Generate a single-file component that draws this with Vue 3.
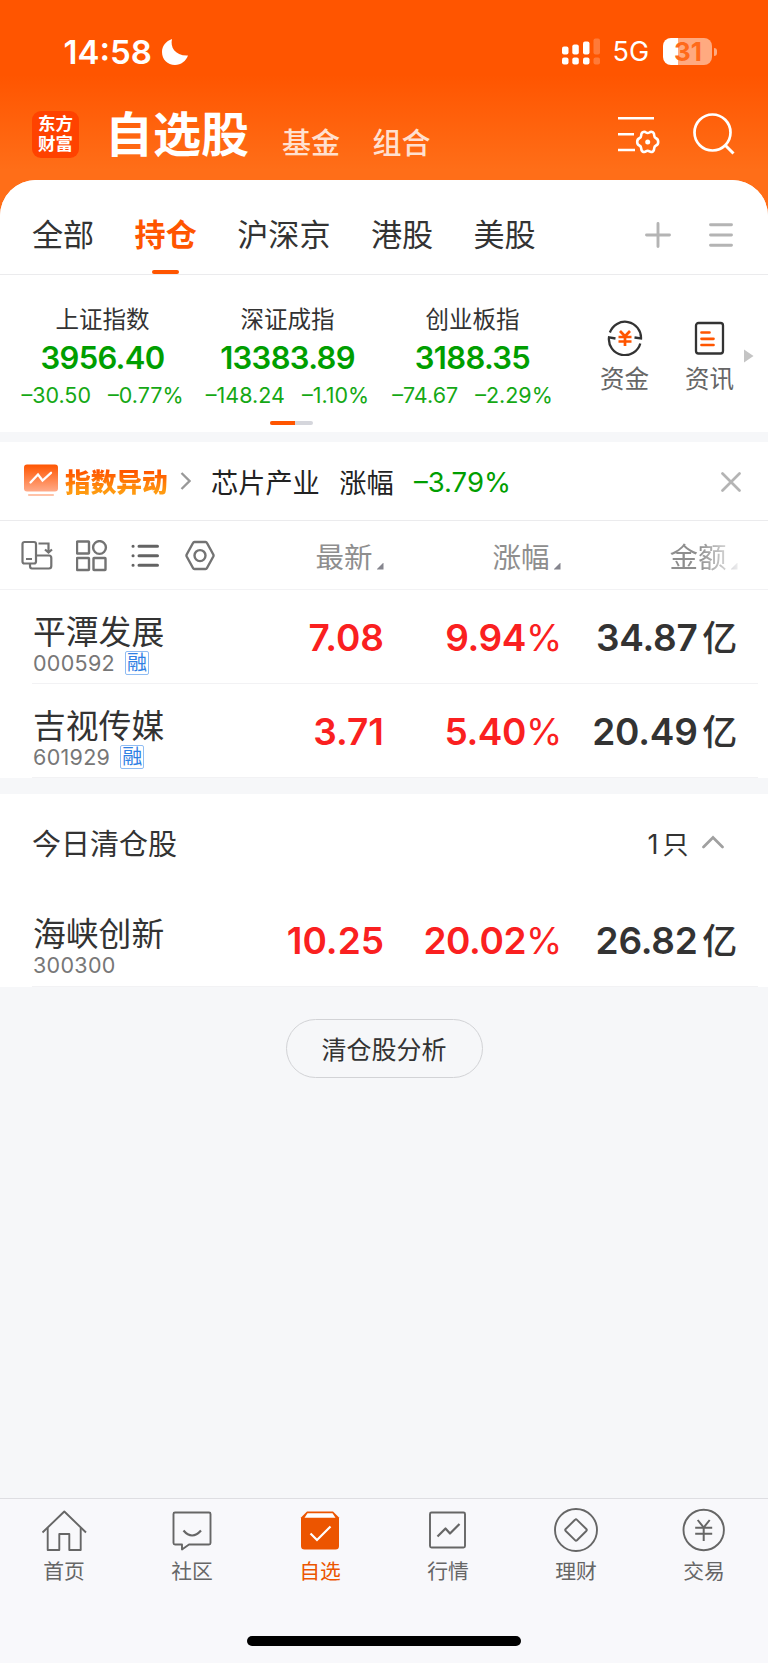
<script setup>
import { ref } from 'vue'

const markets = ['全部', '持仓', '沪深京', '港股', '美股']
const activeMarket = ref('持仓')

const indexes = [
  { name: '上证指数', value: '3956.40', diff: '–30.50', rate: '–0.77%' },
  { name: '深证成指', value: '13383.89', diff: '–148.24', rate: '–1.10%' },
  { name: '创业板指', value: '3188.35', diff: '–74.67', rate: '–2.29%' },
]

const holdings = [
  { name: '平潭发展', code: '000592', margin: true, price: '7.08', rate: '9.94', amount: '34.87' },
  { name: '吉视传媒', code: '601929', margin: true, price: '3.71', rate: '5.40', amount: '20.49' },
]
const cleared = [
  { name: '海峡创新', code: '300300', margin: false, price: '10.25', rate: '20.02', amount: '26.82' },
]

const navs = ['首页', '社区', '自选', '行情', '理财', '交易']
const activeNav = ref('自选')
</script>

<template>
  <div class="phone">
    <header class="top">
      <div class="status">
        <span class="time">14:58</span>
        <svg class="moon" width="28" height="28" viewBox="0 0 28 28">
          <path d="M11 1C9 9 14 18 27 17.500C25 23 20 27 14 27C6.500 27 1 21.500 1 14C1 8 5 3 11 1Z" fill="#fff" />
        </svg>
        <svg class="signal" width="40" height="28" viewBox="0 0 40 28" fill="#fff">
          <rect x="0" y="8.500" width="6.500" height="8" rx="2" />
          <rect x="10.300" y="6.500" width="6.500" height="10" rx="2" />
          <rect x="21" y="3.500" width="6.500" height="13" rx="2" />
          <rect x="0" y="19.500" width="6.500" height="7" rx="2" />
          <rect x="10.300" y="19.500" width="6.500" height="7" rx="2" />
          <rect x="21" y="19.500" width="6.500" height="7" rx="2" />
          <g opacity="0.22">
            <rect x="31.500" y="0.500" width="6.500" height="16" rx="2" />
            <rect x="31.500" y="19.500" width="6.500" height="7" rx="2" />
          </g>
        </svg>
        <span class="net">5G</span>
        <div class="battery">31</div>
        <i class="nub"></i>
      </div>
      <div class="title-bar">
        <div class="logo"><span>东方</span><span>财富</span></div>
        <h1>自选股</h1>
        <span class="sub">基金</span>
        <span class="sub">组合</span>
        <svg class="manage" width="44" height="40" viewBox="0 0 44 40" fill="none" stroke="#fff" stroke-width="2.600">
          <path d="M1 4.300H37M1 20.300H17M1 36H18" />
          <path d="M25.500 18.300Q27.500 17.200 29 18.500Q30.700 19.600 32.400 18.500Q34 17.200 35.900 18.300Q37.300 19.500 37.200 21.500Q37.300 23.500 39 24.300Q41.200 25.300 41.200 27.900Q41.200 30.500 39 31.500Q37.300 32.300 37.200 34.300Q37.300 36.300 35.900 37.500Q34 38.600 32.400 37.300Q30.700 36.200 29 37.300Q27.500 38.600 25.500 37.500Q24.100 36.300 24.200 34.300Q24.100 32.300 22.400 31.500Q20.200 30.500 20.200 27.900Q20.200 25.300 22.400 24.300Q24.100 23.500 24.200 21.500Q24.100 19.500 25.500 18.300Z" />
          <circle cx="30.700" cy="28" r="2.500" fill="#fff" stroke="none" />
        </svg>
        <svg class="search" width="44" height="44" viewBox="0 0 44 44" fill="none" stroke="#fff" stroke-width="2.700">
          <circle cx="20.500" cy="20.500" r="18" />
          <path d="M33 33L41.500 41.500" stroke-width="3" />
        </svg>
      </div>
    </header>

    <main class="card">
      <nav class="markets">
        <span v-for="m in markets" :key="m" class="market" :class="{ active: m === activeMarket }">{{ m }}</span>
        <svg class="plus" width="26" height="26" viewBox="0 0 26 26" stroke="#b4b4b4" stroke-width="2.900" stroke-linecap="round">
          <path d="M13 1.500V24.500M1.500 13H24.500" />
        </svg>
        <svg class="menu" width="24" height="26" viewBox="0 0 24 26" stroke="#b4b4b4" stroke-width="2.900" stroke-linecap="round">
          <path d="M1.500 2.700H22.500M1.500 13H22.500M1.500 23.200H22.500" />
        </svg>
      </nav>

      <section class="indexes">
        <div v-for="item in indexes" :key="item.name" class="index">
          <div class="index-name">{{ item.name }}</div>
          <div class="index-value">{{ item.value }}</div>
          <div class="index-diff"><span>{{ item.diff }}</span><span>{{ item.rate }}</span></div>
        </div>
        <div class="tool">
          <svg width="36" height="36" viewBox="0 0 36 36" fill="none" stroke="#333" stroke-width="2.300">
            <path d="M2.900 12.500A16 16 0 0 1 34 18.500L27.500 17.500" />
            <path d="M33.300 23.500A16 16 0 0 1 2 17.300L8.500 18.500" />
            <path d="M13 11L18 16.300L23 11M11.500 17H24.500M11.500 21.500H24.500M18 16V26" stroke="#ff5500" stroke-width="2.700" />
          </svg>
          <span>资金</span>
        </div>
        <div class="tool">
          <svg width="36" height="36" viewBox="0 0 36 36" fill="none" stroke="#333" stroke-width="2.300">
            <rect x="4" y="3" width="27" height="30.500" rx="2.500" />
            <path d="M9.500 12.500H17.500M9.500 18.800H21.500M9.500 25H21.500" stroke="#ff5500" stroke-width="2.700" stroke-linecap="round" />
          </svg>
          <span>资讯</span>
        </div>
        <svg class="more" width="10" height="14" viewBox="0 0 10 14"><path d="M0 0.500L9.500 7L0 13.500Z" fill="#c4c4c4" /></svg>
        <div class="pager"><i></i></div>
      </section>

      <section class="notice">
        <svg width="34" height="34" viewBox="0 0 34 34" fill="none">
          <defs>
            <linearGradient id="board" x1="0" y1="0" x2="0" y2="1">
              <stop offset="0" stop-color="#ff5500" />
              <stop offset="1" stop-color="#ffab8a" />
            </linearGradient>
          </defs>
          <rect x="0" y="0.500" width="34" height="27" rx="3" fill="url(#board)" />
          <path d="M6.500 18.500L14 10.500L18.500 16.500L27 8.800" stroke="#fff" stroke-width="2.300" stroke-linecap="round" />
          <path d="M5 31H29" stroke="#ffc3a8" stroke-width="2.200" stroke-linecap="round" />
        </svg>
        <b>指数异动</b>
        <svg class="arrow" width="11" height="18" viewBox="0 0 11 18" fill="none" stroke="#999" stroke-width="2.300"><path d="M1.500 1L9.500 9L1.500 17" /></svg>
        <span class="theme">芯片产业</span>
        <span class="theme">涨幅</span>
        <span class="drop">–3.79%</span>
        <svg class="close" width="20" height="20" viewBox="0 0 20 20" stroke="#b4b4b4" stroke-width="2.700" stroke-linecap="round"><path d="M1.500 1.500L18.500 18.500M18.500 1.500L1.500 18.500" /></svg>
      </section>

      <section class="columns">
        <div class="icons">
          <svg width="32" height="32" viewBox="0 0 32 32" fill="none" stroke="#737373" stroke-width="2.200">
            <rect x="1.500" y="2" width="13.500" height="21.500" rx="2" />
            <path d="M5 19H11M17.500 3.500H27.500V12M24 9.500L27.500 12.500L31 9.500" />
            <path d="M15 15.500H28Q30.300 15.500 30.300 18V26Q30.300 28.500 28 28.500H11Q9 28.500 9 26V24" />
          </svg>
          <svg width="32" height="32" viewBox="0 0 32 32" fill="none" stroke="#737373" stroke-width="2.400">
            <rect x="1" y="1.500" width="12" height="12" rx="0.500" />
            <circle cx="23.500" cy="7.500" r="6.400" />
            <rect x="1" y="18" width="12" height="12" rx="0.500" />
            <rect x="17.500" y="18" width="12" height="12" rx="0.500" />
          </svg>
          <svg width="32" height="32" viewBox="0 0 32 32" fill="none" stroke="#636363" stroke-width="3" stroke-linecap="round">
            <path d="M9 6.200H27.500M9 15.700H27.500M9 25.200H27.500M3 6.200H3.100M3 15.700H3.100M3 25.200H3.100" />
          </svg>
          <svg width="32" height="32" viewBox="0 0 32 32" fill="none" stroke="#737373" stroke-width="2.400" stroke-linejoin="round">
            <path d="M9.500 2H20.500Q21.500 2 22 3L28.300 14.500Q28.800 15.500 28.300 16.500L22 28Q21.500 29 20.500 29H9.500Q8.500 29 8 28L1.700 16.500Q1.200 15.500 1.700 14.500L8 3Q8.500 2 9.500 2Z" />
            <circle cx="15" cy="15.600" r="5.500" />
          </svg>
        </div>
        <div class="column">最新<i></i></div>
        <div class="column">涨幅<i></i></div>
        <div class="column faded">金额<i></i></div>
      </section>

      <section class="stocks">
        <div v-for="s in holdings" :key="s.code" class="stock">
          <div class="who">
            <div class="name">{{ s.name }}</div>
            <div class="code">{{ s.code }}<em v-if="s.margin">融</em></div>
          </div>
          <div class="num up">{{ s.price }}</div>
          <div class="num up rate">{{ s.rate }}<u>%</u></div>
          <div class="num amount">{{ s.amount }}<small>亿</small></div>
        </div>
      </section>

      <section class="stocks sold">
        <div class="sold-head">
          <span>今日清仓股</span>
          <span class="count">1<small>只</small></span>
          <svg width="22" height="14" viewBox="0 0 22 14" fill="none" stroke="#a0a0a0" stroke-width="2.700" stroke-linecap="round"><path d="M1.500 12L11 2.500L20.500 12" /></svg>
        </div>
        <div v-for="s in cleared" :key="s.code" class="stock">
          <div class="who">
            <div class="name">{{ s.name }}</div>
            <div class="code">{{ s.code }}<em v-if="s.margin">融</em></div>
          </div>
          <div class="num up">{{ s.price }}</div>
          <div class="num up rate">{{ s.rate }}<u>%</u></div>
          <div class="num amount">{{ s.amount }}<small>亿</small></div>
        </div>
      </section>

      <button class="analyse">清仓股分析</button>
    </main>

    <footer class="tabbar">
      <div class="tabs">
        <div v-for="n in navs" :key="n" class="tab" :class="{ active: n === activeNav }">
          <svg width="46" height="46" viewBox="0 0 46 46" fill="none" stroke="#666" stroke-width="1.900" stroke-linejoin="round">
            <g v-if="n === '首页'">
              <path d="M1.500 24.500L23.300 3.500L45 24.500" />
              <path d="M6.700 20V42H18.300V26H28.300V42H39.700V20" />
            </g>
            <g v-if="n === '社区'">
              <path d="M6 4.500H40Q41.500 4.500 41.500 6V35Q41.500 36.500 40 36.500H20L13 41.500V36.500H6Q4.500 36.500 4.500 35V6Q4.500 4.500 6 4.500Z" />
              <path d="M14.500 22.500Q23 32.500 32 22.500" stroke-width="2.200" />
            </g>
            <g v-if="n === '自选'" stroke="none">
              <path d="M10 3.500H36L42 9.500V38Q42 41.500 38.500 41.500H7.500Q4 41.500 4 38V9.500Z" fill="#ec5500" />
              <path d="M10.500 5.300H35.500L38.500 9.800H7.500Z" fill="#fff" />
              <path d="M13.500 25.500L20 32L33.500 18.500" stroke="#fff" stroke-width="2.200" stroke-linejoin="miter" />
            </g>
            <g v-if="n === '行情'">
              <rect x="5" y="4.500" width="35" height="35" rx="1.500" />
              <path d="M12.500 28.500L20.500 20.500L25 25.500L34.500 16" stroke-width="2.200" />
            </g>
            <g v-if="n === '理财'">
              <circle cx="23" cy="22" r="21" />
              <path d="M22 11.800Q23 10.800 24 11.800L33.300 21Q34.300 22 33.300 23L24 32.200Q23 33.200 22 32.200L12.700 23Q11.700 22 12.700 21Z" />
            </g>
            <g v-if="n === '交易'">
              <circle cx="22.700" cy="22" r="20.200" />
              <path d="M16.700 12L22.700 19.500L28.700 12M14.200 19.700H31.200M14.200 25.700H31.200M22.700 19.500V33" stroke-width="2" />
            </g>
          </svg>
          <span>{{ n }}</span>
        </div>
      </div>
      <div class="home-line"></div>
    </footer>
  </div>
</template>

<style>
body {
  margin: 0;
  background: #f6f7f9;
}
</style>

<style scoped>
.phone {
  width: 768px;
  height: 1663px;
  display: flex;
  flex-direction: column;
  overflow: hidden;
  background: linear-gradient(#ff5500 75px, #ff6e18 170px);
  font-family: Inter, "Noto Sans CJK SC", sans-serif;
  color: #333;
  white-space: nowrap;
}
svg {
  display: block;
  flex: none;
}
.top {
  height: 179.5px;
  flex: none;
  color: #fff;
}
.status {
  display: flex;
  align-items: center;
  height: 103px;
  padding-left: 63.5px;
}
.time {
  width: 97.5px;
  font-size: 33px;
  font-weight: 600;
}
.moon {
  margin-left: -0.5px;
}
.signal {
  margin-left: 373px;
}
.net {
  width: 50px;
  margin-left: 11px;
  font-size: 27px;
  font-weight: 400;
}
.battery {
  width: 49px;
  height: 27px;
  box-sizing: border-box;
  padding-left: 2px;
  border-radius: 8px;
  background: linear-gradient(90deg, #fff 31%, #ffaa80 31%);
  color: #ff6a1a;
  font-size: 26px;
  font-weight: 700;
  line-height: 27px;
  text-align: center;
}
.nub {
  width: 3px;
  height: 8px;
  margin-left: 2px;
  border-radius: 0 4px 4px 0;
  background: #ffaa80;
}
.title-bar {
  display: flex;
  align-items: center;
  height: 62px;
  padding-left: 32px;
}
.logo {
  display: flex;
  flex-direction: column;
  justify-content: center;
  width: 47px;
  height: 47px;
  flex: none;
  border-radius: 9px;
  background: #ff4200;
  font-size: 17.5px;
  font-weight: 700;
  line-height: 20px;
  text-align: center;
}
h1 {
  width: 178px;
  flex: none;
  margin: 1px 0 0 26px;
  font-size: 48px;
  font-weight: 700;
  line-height: 60px;
}
.sub {
  width: 90.5px;
  flex: none;
  margin-left: -1px;
  padding-top: 20px;
  font-size: 29px;
  font-weight: 500;
  line-height: 30px;
  color: #ffe0d0;
}
.sub + .sub {
  margin-left: 0;
}
.manage {
  margin-left: 153.5px;
}
.search {
  margin-left: 31px;
}
.card {
  flex: 1;
  overflow: hidden;
  border-radius: 36px 36px 0 0;
  background: #f6f7f9;
}
.markets {
  display: flex;
  align-items: center;
  gap: 40.4px;
  height: 95px;
  box-sizing: border-box;
  padding: 17px 0 0 32px;
  border-bottom: 1px solid #ebebed;
  background: #fff;
}
.market {
  display: flex;
  flex-direction: column;
  align-items: center;
  height: 77px;
  font-size: 31.1px;
  line-height: 77px;
}
.market.active {
  color: #ff5500;
  font-weight: 700;
}
.market.active::after {
  content: "";
  flex: none;
  width: 27px;
  height: 4px;
  margin-top: -3.5px;
  border-radius: 2px;
  background: #ff5500;
}
.plus {
  margin-left: 68.8px;
}
.menu {
  margin-left: -2.4px;
}
.indexes {
  position: relative;
  display: flex;
  height: 157.5px;
  padding-left: 10px;
  background: #fff;
}
.index {
  width: 185px;
  padding-top: 30px;
  text-align: center;
}
.index-name {
  font-size: 23.500px;
  line-height: 30px;
}
.index-value {
  color: #009e00;
  font-size: 31px;
  font-weight: 600;
  letter-spacing: -0.7px;
  line-height: 45px;
}
.index-diff {
  display: flex;
  justify-content: center;
  gap: 17px;
  color: #15a815;
  font-size: 21.500px;
  line-height: 31px;
}
.tool {
  display: flex;
  flex-direction: column;
  align-items: center;
  width: 49px;
  margin-left: 36px;
  padding-top: 45px;
  color: #666;
  font-size: 24.500px;
  line-height: 46px;
}
.index + .tool {
  margin-left: 35px;
}
.more {
  margin: 74px 0 0 10px;
}
.pager {
  position: absolute;
  left: 270px;
  bottom: 7.5px;
  width: 43px;
  height: 4px;
  overflow: hidden;
  border-radius: 2px;
  background: #d5d6dc;
}
.pager i {
  display: block;
  width: 25px;
  height: 4px;
  background: #ff5500;
}
.notice {
  display: flex;
  align-items: center;
  height: 78px;
  margin-top: 10px;
  padding-left: 24px;
  border-bottom: 1px solid #ebebed;
  background: #fff;
}
.notice b {
  width: 115px;
  margin: -2px 0 0 7px;
  background: linear-gradient(#ff5500 25%, #ff9a10 80%);
  -webkit-background-clip: text;
  background-clip: text;
  color: transparent;
  font-size: 25.700px;
  font-weight: 900;
}
.theme {
  margin-left: 20px;
  color: #222;
  font-size: 27.2px;
}
.theme + .theme {
  margin-left: 19.5px;
}
.drop {
  width: 307px;
  margin: 2px 0 0 20.3px;
  color: #009e00;
  font-size: 27.500px;
}
.close {
  margin-top: 2px;
}
.columns {
  display: flex;
  align-items: center;
  height: 68px;
  padding-left: 21px;
  border-bottom: 1px solid #f2f2f4;
  background: #fff;
}
.icons {
  display: flex;
  flex: none;
  gap: 22.500px;
  width: 294.5px;
  padding-top: 1px;
}
.column {
  display: flex;
  flex: none;
  align-items: center;
  width: 177px;
  color: #8e8e8e;
  font-size: 28.500px;
}
.column i {
  width: 7px;
  height: 7px;
  margin: 22px 0 0 4px;
  background: #85858e;
  clip-path: polygon(100% 0, 100% 100%, 0 100%);
}
.column.faded {
  width: 80px;
  -webkit-mask-image: linear-gradient(90deg, #000 28px, transparent 75px);
  mask-image: linear-gradient(90deg, #000 28px, transparent 75px);
}
.stocks {
  background: #fff;
}
.stock {
  display: grid;
  grid-template-columns: 180px 172px 176px 176px;
  height: 94px;
  box-sizing: border-box;
  margin: 0 10px 0 32px;
  border-bottom: 1px solid #f2f2f4;
}
.who {
  padding-top: 23px;
}
.name {
  padding-left: 1px;
  font-size: 32.800px;
  line-height: 38px;
}
.code {
  display: flex;
  align-items: center;
  height: 24px;
  padding-left: 1px;
  color: #777;
  font-size: 21.500px;
  letter-spacing: 0.300px;
}
.code em {
  width: 22px;
  height: 22px;
  margin-left: 10px;
  border: 1px solid #8fbcf3;
  border-radius: 2px;
  color: #2f80e4;
  font-size: 20px;
  font-style: normal;
  letter-spacing: 0;
  line-height: 22px;
  text-align: center;
}
.num {
  font-size: 37px;
  font-weight: 600;
  line-height: 96px;
  text-align: right;
}
.num small {
  margin-left: 4.5px;
  font-size: 35px;
  font-weight: 500;
}
.rate {
  margin-right: -2px;
  letter-spacing: -0.4px;
}
.rate u {
  font-weight: 400;
  font-size: 37px;
  text-decoration: none;
}
.amount {
  margin-right: -1px;
  letter-spacing: -0.2px;
}
.up {
  color: #fa2020;
}
.sold {
  margin-top: 15.5px;
}
.sold .who {
  padding-top: 22.5px;
}
.sold .num {
  line-height: 95px;
}
.sold-head {
  display: flex;
  align-items: center;
  height: 99px;
  padding: 0 44.5px 1.5px 32px;
  box-sizing: border-box;
  font-size: 29px;
}
.count {
  margin: 0 13px 0 auto;
  font-size: 27px;
}
.count small {
  margin-left: 4px;
  font-size: 26px;
}
.analyse {
  display: block;
  width: 197px;
  height: 59px;
  margin: 32px 0 0 285.5px;
  padding: 0 0 1px;
  border: 1px solid #d2d3d6;
  border-radius: 30px;
  background: none;
  color: #333;
  font-family: inherit;
  font-size: 25px;
}
.tabbar {
  height: 164px;
  flex: none;
  border-top: 1px solid #dedee2;
  background: #f8f8fb;
}
.tabs {
  display: flex;
  height: 137px;
}
.tab {
  display: flex;
  flex: 1;
  flex-direction: column;
  align-items: center;
  padding-top: 8.5px;
  color: #666;
  font-size: 20.800px;
  line-height: 35px;
}
.tab.active {
  color: #ec5500;
}
.home-line {
  width: 274px;
  height: 10px;
  margin: 0 auto;
  border-radius: 5px;
  background: #000;
}
</style>
